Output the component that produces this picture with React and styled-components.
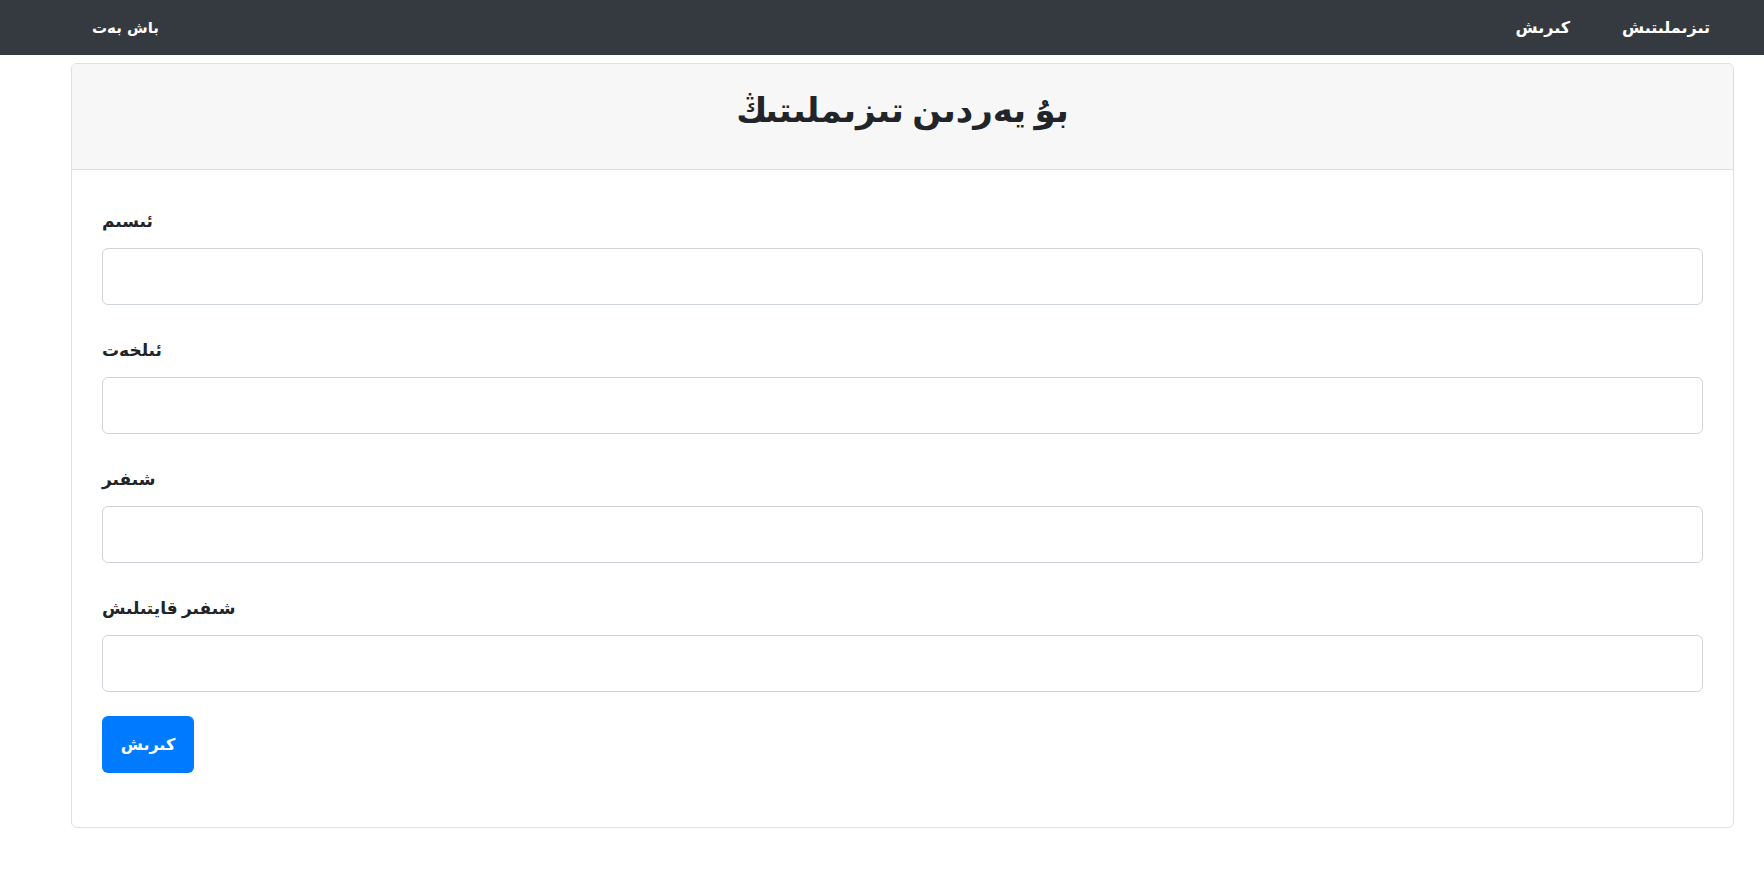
import React from "react";
import styled, { createGlobalStyle } from "styled-components";

const GlobalStyle = createGlobalStyle`
  html, body {
    margin: 0;
    padding: 0;
    background: #ffffff;
  }
  body {
    font-family: "Liberation Serif", "DejaVu Sans", serif;
    color: #212529;
  }
  * {
    box-sizing: border-box;
  }
`;

const NavBar = styled.nav`
  height: 55px;
  background-color: #343a40;
  display: flex;
  align-items: center;
  justify-content: space-between;
  padding: 0 54px 0 92px;
  font-family: "DejaVu Sans", sans-serif;
`;

const Brand = styled.a`
  color: #ffffff;
  font-size: 15px;
  font-weight: bold;
  text-decoration: none;
`;

const NavLinks = styled.div`
  display: flex;
  gap: 52px;
`;

const NavLink = styled.a`
  color: #ffffff;
  font-size: 16px;
  font-weight: bold;
  text-decoration: none;
`;

const Card = styled.div`
  margin: 8px 30px 0 71px;
  border: 1.5px solid #dfdfdf;
  border-radius: 6px;
  background: #ffffff;
  overflow: hidden;
`;

const CardHeader = styled.div`
  background-color: #f7f7f7;
  border-bottom: 1.5px solid #dfdfdf;
  padding: 18px 30px;
  text-align: center;
`;

const Title = styled.h2`
  margin: 0 0 12px;
  font-size: 34px;
  font-weight: bold;
  line-height: 57px;
`;

const CardBody = styled.form`
  padding: 30px 30px 54px;
  display: flex;
  flex-direction: column;
  align-items: flex-start;
`;

const FormGroup = styled.div`
  width: 100%;
  margin-bottom: 24px;
`;

const Label = styled.label`
  display: block;
  font-size: 17px;
  font-weight: 600;
  line-height: 36px;
  padding-top: 4px;
  margin-bottom: 8px;
`;

const Input = styled.input`
  display: block;
  width: 100%;
  height: 57px;
  border: 1.5px solid #ced4da;
  border-radius: 6px;
  padding: 9px 18px;
  font-size: 24px;
  background: #ffffff;
`;

const SubmitButton = styled.button`
  width: 92px;
  height: 57px;
  background-color: #007bff;
  color: #ffffff;
  border: none;
  border-radius: 6px;
  font-family: "DejaVu Sans", sans-serif;
  font-size: 16px;
  font-weight: bold;
  cursor: pointer;
`;

const fields = [
  { name: "name", label: "ئىسىم", type: "text" },
  { name: "email", label: "ئىلخەت", type: "email" },
  { name: "password", label: "شىفىر", type: "password" },
  { name: "confirm", label: "شىفىر قايتىلىش", type: "password" },
];

const App = () => {
  return (
    <>
      <GlobalStyle />
      <NavBar>
        <Brand href="#">باش بەت</Brand>
        <NavLinks>
          <NavLink href="#">كىرىش</NavLink>
          <NavLink href="#">تىزىملىتىش</NavLink>
        </NavLinks>
      </NavBar>
      <Card>
        <CardHeader>
          <Title>بۇ يەردىن تىزىملىتىڭ</Title>
        </CardHeader>
        <CardBody onSubmit={(e) => e.preventDefault()}>
          {fields.map((f) => (
            <FormGroup key={f.name}>
              <Label htmlFor={f.name}>{f.label}</Label>
              <Input id={f.name} type={f.type} />
            </FormGroup>
          ))}
          <SubmitButton type="submit">كىرىش</SubmitButton>
        </CardBody>
      </Card>
    </>
  );
};

export default App;
